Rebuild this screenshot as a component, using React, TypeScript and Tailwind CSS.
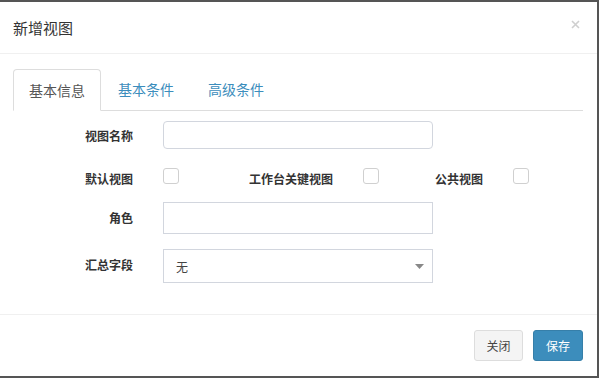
import React from "react";

const font = { fontFamily: '"Noto Sans CJK SC", "Noto Sans", sans-serif' };

export default function App() {
  return (
    <div className="w-[599px] h-[378px] bg-[#555555] pt-[2px] overflow-hidden" style={font}>
      <div className="w-[597px] h-[374px] bg-white flex flex-col">
        {/* header */}
        <div className="h-[52px] border-b border-[#f0f0f0] flex items-center justify-between pl-[13px] pr-[17px]">
          <div className="text-[15px] text-[#333] leading-[21px]">新增视图</div>
          <svg width="9" height="9" viewBox="0 0 9 9" className="mb-[6px]">
            <path d="M1 1 L8 8 M8 1 L1 8" stroke="#cfcfcf" strokeWidth="1.6" />
          </svg>
        </div>
        {/* body */}
        <div className="h-[260px] pl-[13px] pr-[14px] pt-[15px]">
          <div className="flex border-b border-[#ddd] h-[42px]">
            <div className="h-[42px] px-[15px] border border-[#ddd] border-b-white rounded-t-[4px] bg-white flex items-center text-[14px] text-[#555] mr-[2px]">
              基本信息
            </div>
            <div className="h-[41px] px-[15px] flex items-center text-[14px] text-[#3c8dbc] mr-[4px]">基本条件</div>
            <div className="h-[41px] px-[15px] flex items-center text-[14px] text-[#3c8dbc]">高级条件</div>
          </div>
          {/* row 1 */}
          <div className="flex items-center mt-[10px] h-[28px]">
            <div className="w-[120px] text-right text-[12px] font-bold text-[#333] pt-[1px]">视图名称</div>
            <div className="ml-[30px] w-[270px] h-[28px] border border-[#d2d6de] rounded-[4px]" />
          </div>
          {/* row 2 */}
          <div className="flex items-start mt-[19px] h-[16px]">
            <div className="w-[120px] text-right text-[12px] font-bold text-[#333] leading-[16px] pt-[3px]">默认视图</div>
            <div className="ml-[30px] w-[16px] h-[16px] border border-[#d0d0d0] rounded-[3px]" />
            <div className="w-[154px] text-right text-[12px] font-bold text-[#333] leading-[16px] pt-[3px]">工作台关键视图</div>
            <div className="ml-[30px] w-[16px] h-[16px] border border-[#d0d0d0] rounded-[3px]" />
            <div className="w-[104px] text-right text-[12px] font-bold text-[#333] leading-[16px] pt-[3px]">公共视图</div>
            <div className="ml-[30px] w-[16px] h-[16px] border border-[#d0d0d0] rounded-[3px]" />
          </div>
          {/* row 3 */}
          <div className="flex items-center mt-[18px] h-[32px]">
            <div className="w-[120px] text-right text-[12px] font-bold text-[#333]">角色</div>
            <div className="ml-[30px] w-[270px] h-[32px] border border-[#d2d6de]" />
          </div>
          {/* row 4 */}
          <div className="flex items-center mt-[15px] h-[34px]">
            <div className="w-[120px] text-right text-[12px] font-bold text-[#333] pb-[3px]">汇总字段</div>
            <div className="ml-[30px] w-[270px] h-[34px] border border-[#d2d6de] flex items-center justify-between pl-[12px] pr-[8px]">
              <span className="text-[12px] text-[#444] pt-[2px]">无</span>
              <svg width="9" height="5" viewBox="0 0 9 5" className="mt-[1px]">
                <path d="M0 0 L9 0 L4.5 5 Z" fill="#888" />
              </svg>
            </div>
          </div>
        </div>
        {/* footer */}
        <div className="border-t border-[#f0f0f0] flex-1 flex justify-end items-start pt-[15px] pr-[14px] gap-[10px]">
          <div className="w-[49px] h-[31px] bg-[#f4f4f4] border border-[#ddd] rounded-[3px] flex items-center justify-center text-[12px] text-[#444]">
            关闭
          </div>
          <div className="w-[50px] h-[31px] bg-[#3c8dbc] border border-[#367fa9] rounded-[3px] flex items-center justify-center text-[12px] text-white">
            保存
          </div>
        </div>
      </div>
    </div>
  );
}
